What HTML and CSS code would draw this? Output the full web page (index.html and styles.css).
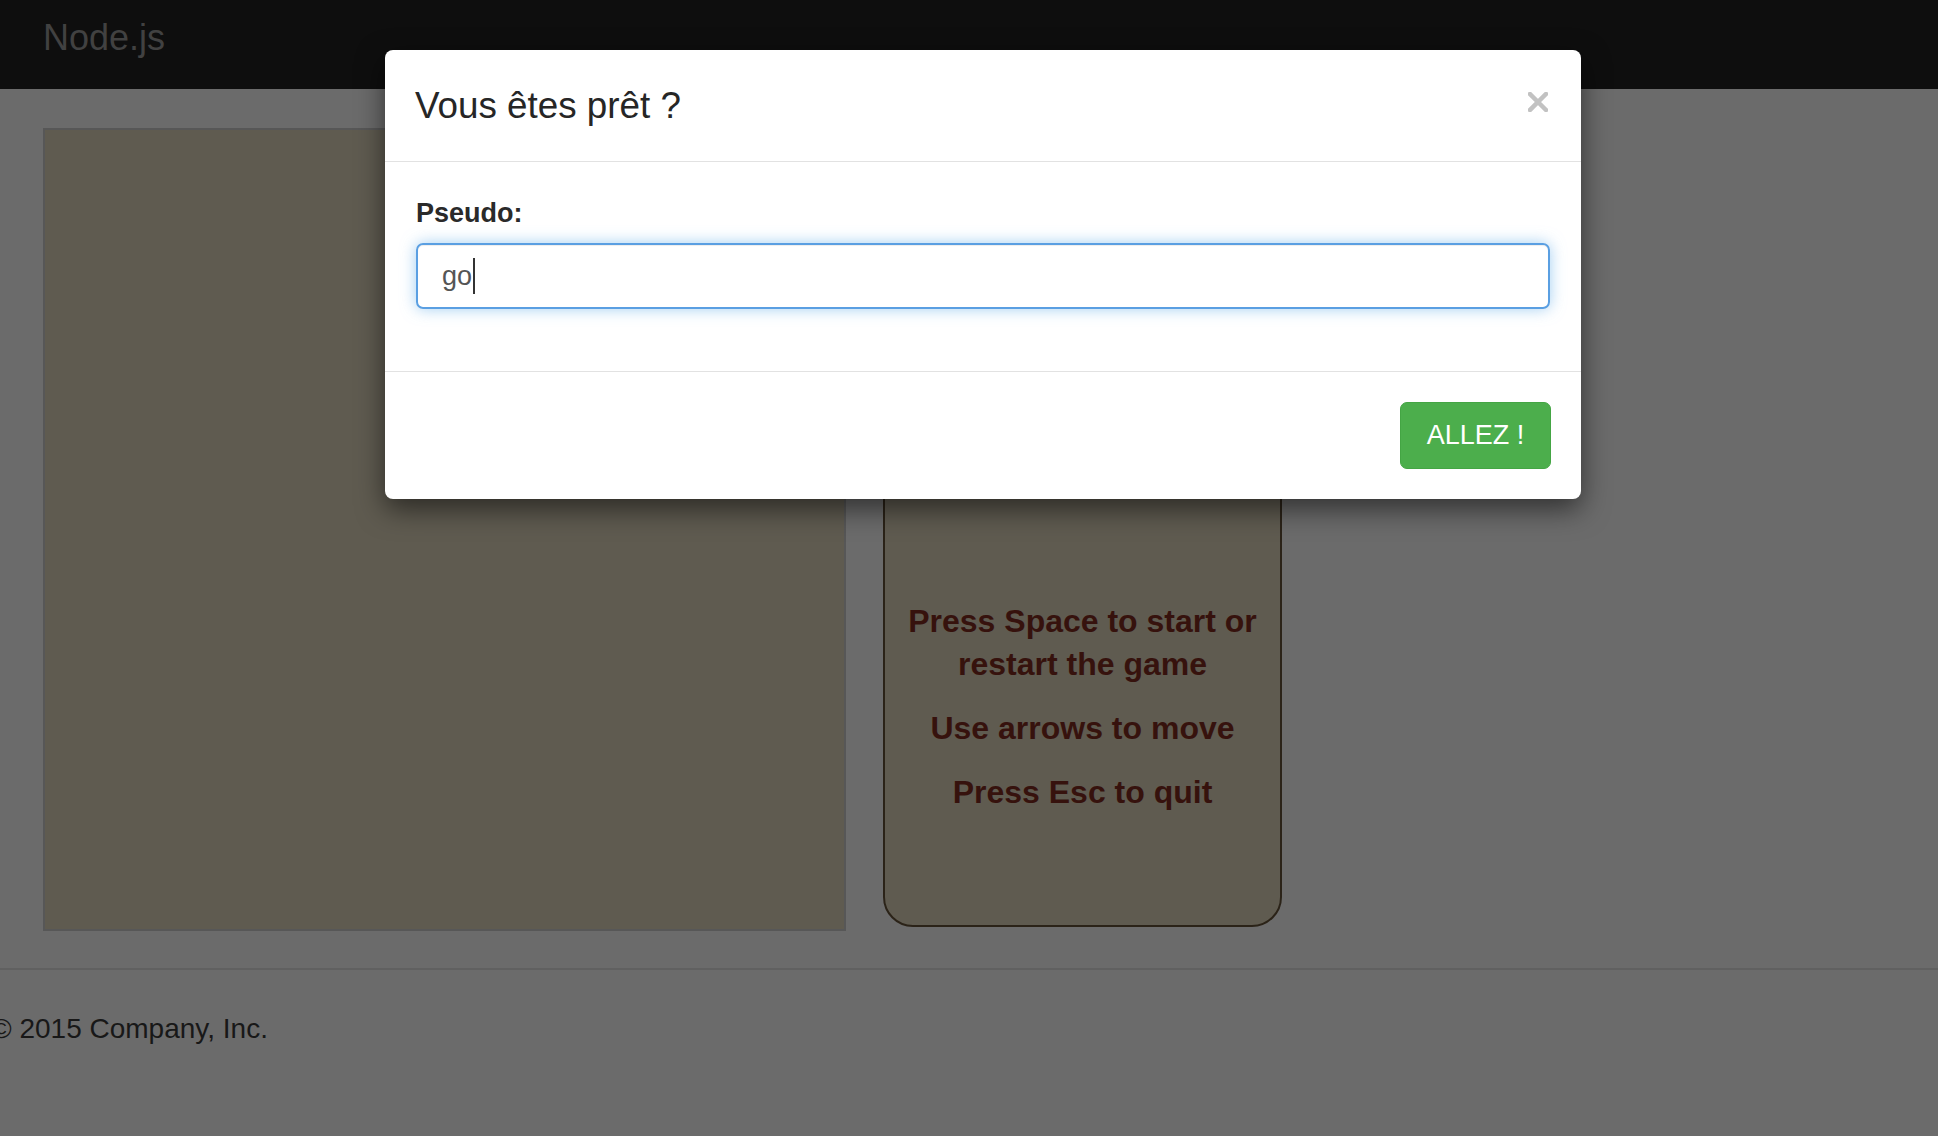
FILE: index.html
```html
<!DOCTYPE html>
<html lang="fr">
<head>
<meta charset="utf-8">
<title>Node.js</title>
<link rel="stylesheet" href="styles.css">
</head>
<body>
<header class="navbar">
  <a class="brand">Node.js</a>
</header>

<main class="main">
  <div class="canvas"></div>
  <aside class="panel">
    <p>Press Space to start or restart the game</p>
    <p>Use arrows to move</p>
    <p>Press Esc to quit</p>
  </aside>
</main>

<footer class="footer">
  <hr class="footer-rule">
  <p class="copy">© 2015 Company, Inc.</p>
</footer>

<div class="modal">
  <div class="modal-header">
    <h4 class="modal-title">Vous êtes prêt ?</h4>
    <span class="close" aria-label="Close">
      <svg width="20" height="20" viewBox="0 0 20 20"><path d="M2 2 L18 18 M18 2 L2 18" stroke="#c2c2c2" stroke-width="4.5" stroke-linecap="square" fill="none"/></svg>
    </span>
  </div>
  <div class="modal-body">
    <label class="label">Pseudo:</label>
    <div class="input">go<span class="caret"></span></div>
  </div>
  <div class="modal-footer">
    <button class="btn">ALLEZ !</button>
  </div>
</div>
</body>
</html>
```

FILE: styles.css
```css
html, body {
  margin: 0;
  padding: 0;
}
body {
  background: #6b6b6b;
  font-family: "Liberation Sans", Arial, sans-serif;
  width: 1938px;
  height: 1136px;
  overflow: hidden;
  position: relative;
}
.navbar {
  box-sizing: border-box;
  height: 89px;
  background: #0e0e0e;
  padding: 18px 0 0 43px;
}
.brand {
  display: block;
  font-size: 36px;
  line-height: 40px;
  color: #414141;
}
.main {
  display: flex;
  gap: 37px;
  padding: 39px 0 0 43px;
  align-items: flex-start;
}
.canvas {
  width: 799px;
  height: 799px;
  border: 2px solid #575757;
  background: #5f5b50;
}
.panel {
  box-sizing: border-box;
  width: 399px;
  height: 799px;
  border: 2px solid #2b2318;
  border-radius: 30px;
  background: #5f5b50;
  padding: 470px 6px 0;
  text-align: center;
  color: #36120d;
  font-weight: bold;
  font-size: 32px;
  line-height: 43px;
}
.panel p {
  margin: 0 0 21px;
}
.footer-rule {
  margin: 37px 0 0;
  border: 0;
  border-top: 2px solid #606060;
  height: 0;
}
.copy {
  margin: 40px 0 0 -9px;
  font-size: 28px;
  line-height: 38px;
  color: #181818;
}
.modal {
  position: absolute;
  left: 385px;
  top: 50px;
  width: 1196px;
  background: #fff;
  border-radius: 8px;
  box-shadow: 0 10px 28px rgba(0, 0, 0, 0.55);
}
.modal-header {
  display: flex;
  justify-content: space-between;
  align-items: flex-start;
  padding: 32px 33px 31px 30px;
  border-bottom: 1px solid #e2e2e2;
}
.modal-title {
  margin: 0;
  font-size: 36.8px;
  line-height: 48px;
  font-weight: normal;
  color: #262626;
}
.close {
  display: block;
  width: 20px;
  height: 20px;
  margin-top: 10px;
}
.close svg {
  display: block;
}
.modal-body {
  padding: 32px 31px 62px 31px;
  border-bottom: 1px solid #e2e2e2;
}
.label {
  display: block;
  font-size: 27px;
  line-height: 38px;
  font-weight: bold;
  color: #2a2a2a;
  margin-bottom: 11px;
}
.input {
  box-sizing: border-box;
  height: 66px;
  border: 2px solid #5a9fe2;
  border-radius: 7px;
  box-shadow: inset 0 1px 1px rgba(0,0,0,0.075), 0 0 15px rgba(102, 175, 233, 0.6);
  display: flex;
  align-items: center;
  padding-left: 24px;
  font-size: 27px;
  color: #555;
}
.caret {
  display: inline-block;
  width: 2px;
  height: 36px;
  background: #333;
  margin-left: 1px;
}
.modal-footer {
  display: flex;
  justify-content: flex-end;
  padding: 30px;
}
.btn {
  box-sizing: border-box;
  width: 151px;
  height: 67px;
  background: #4cae4c;
  border: 1px solid #44a544;
  border-radius: 7px;
  color: #fff;
  font-family: "Liberation Sans", Arial, sans-serif;
  font-size: 27px;
  padding: 0;
}
```
